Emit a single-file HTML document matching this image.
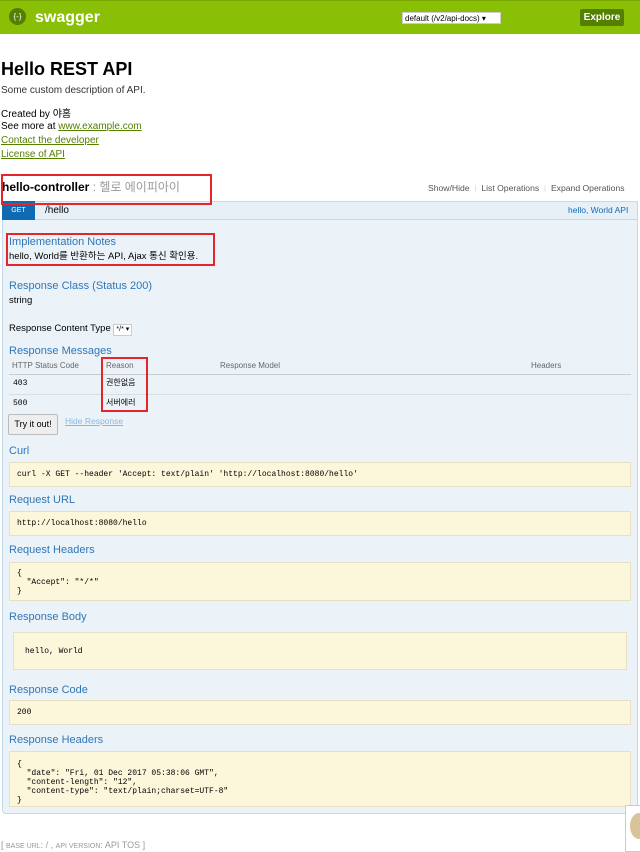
<!DOCTYPE html>
<html><head><meta charset="utf-8"><style>
*{margin:0;padding:0;box-sizing:border-box}
body{width:640px;height:852px;position:relative;background:#fff;font-family:"Liberation Sans","Noto Sans CJK KR",sans-serif;font-size:11px;color:#000;overflow:hidden}
.p{position:absolute;white-space:nowrap;line-height:1.2}
.h{color:#2f76b8;font-size:11px}
.code{position:absolute;left:9px;width:622px;background:#fcf6db;border:1px solid #e5e0c6;font-family:"Liberation Mono",monospace;font-size:8px;color:#000;padding:5px 7px;line-height:9px;white-space:pre}
.red{position:absolute;border:2px solid #e8242b}
.lk{color:#547f00;text-decoration:underline}
</style></head><body>
<div class="p" style="left:0;top:0;width:640px;height:34px;background:#89bf04;border-top:1px solid #7aa904"></div>
<div class="p" style="left:9px;top:8px;width:17px;height:17px;border-radius:50%;background:#547f00;color:#fff;font-size:8px;text-align:center;line-height:17px">{-}</div>
<div class="p" style="left:35px;top:8px;color:#fff;font-weight:bold;font-size:16px">swagger</div>
<div class="p" style="left:402px;top:12px;width:99px;height:12px;background:#fff;border:1px solid #ccc;font-size:8px;line-height:11px;padding-left:2px">default (/v2/api-docs) ▾</div>
<div class="p" style="left:580px;top:9px;width:44px;height:17px;background:#547f00;color:#fff;font-weight:bold;font-size:10px;text-align:center;line-height:17px;border-radius:2px">Explore</div>

<div class="p" style="left:1px;top:59px;font-size:18px;font-weight:bold">Hello REST API</div>
<div class="p" style="left:1px;top:85px;font-size:10px;color:#333">Some custom description of API.</div>
<div class="p" style="left:1px;top:109px;font-size:10px">Created by 야홈</div>
<div class="p" style="left:1px;top:121px;font-size:10px">See more at <span class="lk">www.example.com</span></div>
<div class="p" style="left:1px;top:135px;font-size:10px"><span class="lk">Contact the developer</span></div>
<div class="p" style="left:1px;top:149px;font-size:10px"><span class="lk">License of API</span></div>

<div class="p" style="left:2px;top:180px;font-size:12px;font-weight:bold">hello-controller <span style="font-weight:normal;color:#999">: 헬로 에이피아이</span></div>
<div class="p" style="left:428px;top:183px;font-size:8.6px;color:#555">Show/Hide <span style="color:#ddd">&nbsp;|&nbsp;</span> List Operations <span style="color:#ddd">&nbsp;|&nbsp;</span> Expand Operations</div>

<div class="p" style="left:2px;top:201px;width:636px;height:613px;background:#ebf3f9;border:1px solid #c3d9ec;border-radius:0 0 4px 4px"></div>
<div class="p" style="left:2px;top:201px;width:636px;height:19px;background:#e7f0f7;border:1px solid #c3d9ec"></div>
<div class="p" style="left:2px;top:201px;width:33px;height:19px;background:#0f6ab4;color:#fff;font-size:7px;text-align:center;line-height:19px">GET</div>
<div class="p" style="left:45px;top:205px;font-size:10px">/hello</div>
<div class="p" style="left:568px;top:205px;font-size:8.5px;color:#0f6ab4">hello, World API</div>
<div class="red" style="left:1px;top:174px;width:211px;height:31px"></div>

<div class="p h" style="left:9px;top:236px">Implementation Notes</div>
<div class="p" style="left:9px;top:251px;font-size:9.5px">hello, World를 반환하는 API, Ajax 통신 확인용.</div>
<div class="red" style="left:6px;top:233px;width:209px;height:33px"></div>

<div class="p h" style="left:9px;top:280px">Response Class (Status 200)</div>
<div class="p" style="left:9px;top:295px;font-size:9.5px">string</div>
<div class="p" style="left:9px;top:323px;font-size:9.5px">Response Content Type <span style="display:inline-block;border:1px solid #ccc;background:#fff;font-size:7px;padding:0 2px;line-height:10px">*/* ▾</span></div>
<div class="p h" style="left:9px;top:345px">Response Messages</div>
<div class="p" style="left:12px;top:361px;font-size:8px;color:#666">HTTP Status Code</div>
<div class="p" style="left:106px;top:361px;font-size:8px;color:#666">Reason</div>
<div class="p" style="left:220px;top:361px;font-size:8px;color:#666">Response Model</div>
<div class="p" style="left:531px;top:361px;font-size:8px;color:#666">Headers</div>
<div class="p" style="left:9px;top:374px;width:622px;height:1px;background:#ccc"></div>
<div class="p" style="left:9px;top:394px;width:622px;height:1px;background:#ddd"></div>
<div class="p" style="left:13px;top:379px;font-size:8px;font-family:'Liberation Mono',monospace">403</div>
<div class="p" style="left:106px;top:378px;font-size:8px">권한없음</div>
<div class="p" style="left:13px;top:399px;font-size:8px;font-family:'Liberation Mono',monospace">500</div>
<div class="p" style="left:106px;top:398px;font-size:8px">서버에러</div>
<div class="red" style="left:101px;top:357px;width:47px;height:55px"></div>
<div class="p" style="left:8px;top:414px;width:50px;height:21px;background:#eee;border:1px solid #bbb;border-radius:2px;font-size:9px;text-align:center;line-height:19px">Try it out!</div>
<div class="p" style="left:65px;top:416px;font-size:8.5px;color:#88b8e0;text-decoration:underline">Hide Response</div>

<div class="p h" style="left:9px;top:445px">Curl</div>
<div class="code" style="top:462px;height:25px;padding-top:7px">curl -X GET --header 'Accept: text/plain' 'http://localhost:8080/hello'</div>
<div class="p h" style="left:9px;top:494px">Request URL</div>
<div class="code" style="top:511px;height:25px;padding-top:7px">http://localhost:8080/hello</div>
<div class="p h" style="left:9px;top:544px">Request Headers</div>
<div class="code" style="top:562px;height:39px;padding-top:6px">{
  "Accept": "*/*"
}</div>
<div class="p h" style="left:9px;top:611px">Response Body</div>
<div class="code" style="top:632px;height:38px;left:13px;width:614px;padding:14px 11px">hello, World</div>
<div class="p h" style="left:9px;top:684px">Response Code</div>
<div class="code" style="top:700px;height:25px;padding-top:7px">200</div>
<div class="p h" style="left:9px;top:734px">Response Headers</div>
<div class="code" style="top:751px;height:56px;padding-top:8px">{
  "date": "Fri, 01 Dec 2017 05:38:06 GMT",
  "content-length": "12",
  "content-type": "text/plain;charset=UTF-8"
}</div>

<div class="p" style="left:1px;top:840px;font-size:9px;color:#999">[ <span style="font-size:7px">BASE URL</span>: / , <span style="font-size:7px">API VERSION</span>: API TOS ]</div>
<div class="p" style="left:625px;top:805px;width:20px;height:47px;border:1px solid #ccc;background:#fff"></div>
<div class="p" style="left:630px;top:813px;width:18px;height:26px;border-radius:50%;background:#d9c39a"></div>
</body></html>
